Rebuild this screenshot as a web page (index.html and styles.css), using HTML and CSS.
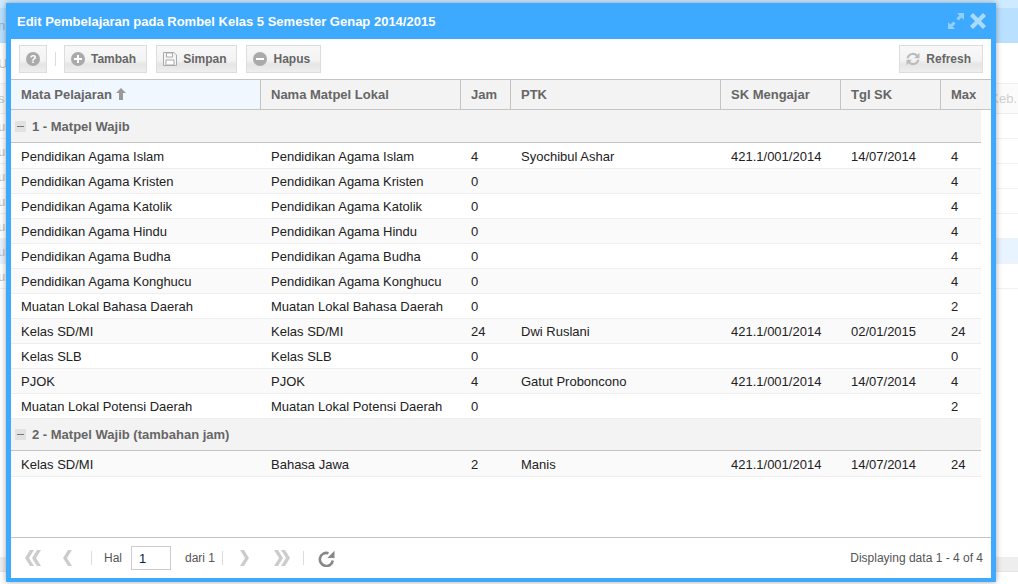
FILE: index.html
```html
<!DOCTYPE html>
<html lang="id">
<head>
<meta charset="utf-8">
<title>Edit Pembelajaran</title>
<link rel="stylesheet" href="styles.css">
</head>
<body>
<div class="backdrop">
  <div class="bd-top"></div>
  <div class="bd-band"><span class="bd-left">n</span></div>
  <div class="bd-tools"><span class="bd-left">U</span></div>
  <div class="bd-head"><span class="bd-left">s</span><span class="bd-keb">Keb.</span></div>
  <div class="bd-row"><span class="bd-left">ul</span></div>
  <div class="bd-row"><span class="bd-left">ul</span></div>
  <div class="bd-row"><span class="bd-left">ul</span></div>
  <div class="bd-row"><span class="bd-left">ul</span></div>
  <div class="bd-row"><span class="bd-left">ul</span></div>
  <div class="bd-row bd-sel"><span class="bd-left">ul</span></div>
  <div class="bd-row"><span class="bd-left">ul</span></div>
  <div class="bd-foot"></div>
</div>

<section class="win">
  <header class="win-title">
    <h1>Edit Pembelajaran pada Rombel Kelas 5 Semester Genap 2014/2015</h1>
    <div class="win-tools">
      <svg class="i-max" viewBox="1 1 16 16" width="16" height="16"><path d="M10 1h7v7l-2.400-2.400-3 3-2.200-2.200 3-3zM8 17H1v-7l2.400 2.400 3-3 2.200 2.200-3 3z"/></svg>
      <svg class="i-close" viewBox="1 1 16 16" width="16" height="16"><path d="M4 1l5 5 5-5 3 3-5 5 5 5-3 3-5-5-5 5-3-3 5-5-5-5z"/></svg>
    </div>
  </header>

  <div class="toolbar">
    <button class="btn btn-icon"><svg viewBox="0 0 14 14" width="14" height="14"><circle cx="7" cy="7" r="7" fill="#aaa"/><text x="7" y="11" class="q">?</text></svg></button>
    <span class="tb-sep"></span>
    <button class="btn"><svg viewBox="0 0 14 14" width="14" height="14"><circle cx="7" cy="7" r="7" fill="#aaa"/><path d="M6 3h2v3h3v2H8v3H6V8H3V6h3z" fill="#fff"/></svg>Tambah</button>
    <button class="btn"><svg viewBox="0 0 14 14" width="14" height="14"><path d="M.5.500h10.500l2.500 2.500v10.500H.5z" fill="#f4f4f4" stroke="#aaa"/><path d="M3.500 1h6v4h-6zM3 8h8v5H3z" fill="#fff" stroke="#aaa"/></svg>Simpan</button>
    <button class="btn"><svg viewBox="0 0 14 14" width="14" height="14"><circle cx="7" cy="7" r="7" fill="#aaa"/><path d="M3 6h8v2H3z" fill="#fff"/></svg>Hapus</button>
    <button class="btn btn-right"><svg viewBox="0 0 14 14" width="14" height="14"><path d="M.5 6.200a6.600 6.600 0 0 1 11-3.500L13.500.8v5.400H8.100l1.900-1.900A4.200 4.200 0 0 0 2.800 6.200zM13.500 7.800a6.600 6.600 0 0 1-11 3.500L.5 13.200V7.800h5.400L4 9.700a4.200 4.200 0 0 0 7.200-1.900z" fill="#bbb"/></svg>Refresh</button>
  </div>

  <div class="grid-area">
    <table class="grid grid-head">
      <colgroup><col class="c1"><col class="c2"><col class="c3"><col class="c4"><col class="c5"><col class="c6"><col class="c7h"></colgroup>
      <thead>
        <tr>
          <th class="sorted">Mata Pelajaran <svg class="i-sort" viewBox="0 0 10 12" width="10" height="12"><path d="M5 0l5 5H7v7H3V5H0z"/></svg></th>
          <th>Nama Matpel Lokal</th><th>Jam</th><th>PTK</th><th>SK Mengajar</th><th>Tgl SK</th><th>Max</th>
        </tr>
      </thead>
    </table>
    <table class="grid grid-body">
      <colgroup><col class="c1"><col class="c2"><col class="c3"><col class="c4"><col class="c5"><col class="c6"><col class="c7"></colgroup>
      <tbody>
        <tr class="group"><td colspan="7"><span class="tree"></span>1 - Matpel Wajib</td></tr>
        <tr class="first"><td>Pendidikan Agama Islam</td><td>Pendidikan Agama Islam</td><td>4</td><td>Syochibul Ashar</td><td>421.1/001/2014</td><td>14/07/2014</td><td>4</td></tr>
        <tr class="alt"><td>Pendidikan Agama Kristen</td><td>Pendidikan Agama Kristen</td><td>0</td><td></td><td></td><td></td><td>4</td></tr>
        <tr><td>Pendidikan Agama Katolik</td><td>Pendidikan Agama Katolik</td><td>0</td><td></td><td></td><td></td><td>4</td></tr>
        <tr class="alt"><td>Pendidikan Agama Hindu</td><td>Pendidikan Agama Hindu</td><td>0</td><td></td><td></td><td></td><td>4</td></tr>
        <tr><td>Pendidikan Agama Budha</td><td>Pendidikan Agama Budha</td><td>0</td><td></td><td></td><td></td><td>4</td></tr>
        <tr class="alt"><td>Pendidikan Agama Konghucu</td><td>Pendidikan Agama Konghucu</td><td>0</td><td></td><td></td><td></td><td>4</td></tr>
        <tr><td>Muatan Lokal Bahasa Daerah</td><td>Muatan Lokal Bahasa Daerah</td><td>0</td><td></td><td></td><td></td><td>2</td></tr>
        <tr class="alt"><td>Kelas SD/MI</td><td>Kelas SD/MI</td><td>24</td><td>Dwi Ruslani</td><td>421.1/001/2014</td><td>02/01/2015</td><td>24</td></tr>
        <tr><td>Kelas SLB</td><td>Kelas SLB</td><td>0</td><td></td><td></td><td></td><td>0</td></tr>
        <tr class="alt"><td>PJOK</td><td>PJOK</td><td>4</td><td>Gatut Proboncono</td><td>421.1/001/2014</td><td>14/07/2014</td><td>4</td></tr>
        <tr><td>Muatan Lokal Potensi Daerah</td><td>Muatan Lokal Potensi Daerah</td><td>0</td><td></td><td></td><td></td><td>2</td></tr>
        <tr class="group group-next"><td colspan="7"><span class="tree"></span>2 - Matpel Wajib (tambahan jam)</td></tr>
        <tr class="alt first"><td>Kelas SD/MI</td><td>Bahasa Jawa</td><td>2</td><td>Manis</td><td>421.1/001/2014</td><td>14/07/2014</td><td>24</td></tr>
      </tbody>
    </table>
  </div>

  <footer class="pager">
    <svg class="pg pg-first" viewBox="0 0 18 16" width="18" height="16"><path d="M7 0h4L6 8l5 8H7L2 8zM14 0h4l-5 8 5 8h-4L9 8z"/></svg>
    <svg class="pg pg-prev" viewBox="0 0 10 16" width="10" height="16"><path d="M6 0h4L5 8l5 8H6L1 8z"/></svg>
    <span class="pg-sep"></span>
    <span class="pg-label">Hal</span>
    <input class="pg-input" value="1" aria-label="Halaman">
    <span class="pg-label pg-of">dari 1</span>
    <span class="pg-sep pg-sep2"></span>
    <svg class="pg pg-next" viewBox="0 0 10 16" width="10" height="16"><path d="M0 0h4l5 8-5 8H0l5-8z"/></svg>
    <svg class="pg pg-last" viewBox="0 0 18 16" width="18" height="16"><path d="M0 0h4l5 8-5 8H0l5-8zM7 0h4l5 8-5 8H7l5-8z"/></svg>
    <span class="pg-sep pg-sep3"></span>
    <svg class="pg-reload" viewBox="0 0 17 17" width="17" height="17"><path d="M14.800 10.500A6.500 6.500 0 1 1 10.500 3.300" fill="none" stroke="#888" stroke-width="2.600"/><path d="M16.500 .8v7.200H9.300z" fill="#888"/></svg>
    <span class="pg-info">Displaying data 1 - 4 of 4</span>
  </footer>
</section>
</body>
</html>
```
FILE: styles.css
```css
* { box-sizing: border-box; }
html, body { margin: 0; padding: 0; height: 100%; overflow: hidden; }
body { background: #fff; font-family: "Liberation Sans", Arial, sans-serif; font-size: 13px; color: #222; }

.backdrop { height: 584px; color: #c4c4c4; white-space: nowrap; overflow: hidden; }
.backdrop > div { display: flex; justify-content: space-between; align-items: center; }
.bd-left { margin-left: -2px; }
.bd-top { height: 8px; background: #cdeaff; }
.bd-band { height: 35px; background: #b9e0ff; color: #8fb6d0; }
.bd-tools { height: 40px; }
.bd-head { height: 31px; background: #fbfbfb; border-top: 1px solid #eee; border-bottom: 1px solid #eee; }
.bd-keb { margin-right: 1px; color: #d0d0d0; }
.bd-row { height: 25px; border-bottom: 1px solid #f1f1f1; }
.bd-sel { background: #e8f4ff; }
.bd-foot { height: 15px; margin-top: 268px; background: #eee; border-bottom: 1px solid #e4e4e4; }

.win { position: absolute; left: 6px; top: 3px; width: 990px; height: 579px; background: #3daaff; padding: 0 5px 4px; display: flex; flex-direction: column; box-shadow: 0 0 6px rgba(0,0,0,.35); }

.win-title { height: 36px; flex: none; display: flex; align-items: center; justify-content: space-between; margin: 0 -5px; padding: 0 10px 0 11px; }
.win-title h1 { margin: 0; font-size: 13px; font-weight: bold; color: #fff; }
.win-tools { display: flex; gap: 6px; }
.i-max { fill: #8fd0ff; }
.i-close { fill: #a9dbff; }

.toolbar { height: 40px; flex: none; background: #fff; display: flex; align-items: flex-start; padding: 6px 8px 0; }
.btn { height: 28px; border: 1px solid #ddd; background: linear-gradient(#f8f8f8 0, #f3f3f3 55%, #e5e5e5 70%, #eee 100%); font: bold 12px "Liberation Sans", Arial, sans-serif; color: #666; display: flex; align-items: center; gap: 6px; padding: 0 10px 0 6px; margin-right: 9px; }
.btn-icon { width: 28px; justify-content: center; padding: 0; margin-right: 0; }
.tb-sep { width: 1px; height: 14px; background: #ddd; margin: 7px 8px 0; }
.btn-right { margin-left: auto; margin-right: 0; padding-right: 11px; }
.q { font: bold 11px "Liberation Sans", sans-serif; fill: #fff; text-anchor: middle; }

.grid-area { flex: 1; min-height: 0; background: #fff; overflow: hidden; }
.grid { border-collapse: separate; border-spacing: 0; table-layout: fixed; }
.grid-head { width: 980px; }
.grid-body { width: 970px; }
.c1 { width: 250px; } .c2 { width: 200px; } .c3 { width: 50px; } .c4 { width: 210px; } .c5 { width: 120px; } .c6 { width: 100px; } .c7 { width: 40px; } .c7h { width: 50px; }
.grid th { height: 31px; background: #f3f3f3; border-top: 1px solid #c4c4c4; border-bottom: 1px solid #c4c4c4; border-right: 1px solid #c4c4c4; text-align: left; font-size: 13px; font-weight: bold; color: #666; padding: 0 10px; white-space: nowrap; }
.grid th:last-child { border-right: 0; }
.grid th.sorted { background: #f0f7fe; }
.i-sort { fill: #999; vertical-align: -1px; }
.grid td { height: 25px; padding: 1px 10px 0; border-bottom: 1px solid #eee; color: #222; white-space: nowrap; overflow: hidden; }
.grid tr.first td { height: 26px; }
.grid tr.alt td { background: #fafafa; }
.grid tr.group td { height: 33px; background: #f3f3f3; font-weight: bold; color: #666; padding: 0 0 0 4px; border-bottom: 1px solid #c4c4c4; }
.grid tr.group-next td { height: 32px; }
.tree { display: inline-block; position: relative; width: 11px; height: 11px; background: #e2e2e2; margin-right: 6px; vertical-align: -1px; }
.tree::after { content: ""; position: absolute; left: 2px; right: 2px; top: 5px; height: 1px; background: #777; }

.pager { height: 41px; flex: none; background: #fff; border-top: 1px solid #c4c4c4; display: flex; align-items: center; padding: 0 8px 0 12px; font-size: 12px; color: #555; }
.pg { fill: #ccc; flex: none; }
.pg-prev { margin-left: 21px; }
.pg-sep { width: 1px; height: 14px; background: #ddd; margin-left: 19px; flex: none; }
.pg-label { margin-left: 12px; }
.pg-input { width: 40px; height: 24px; margin-left: 9px; border: 1px solid #ccc; padding: 0 7px; font: 13px "Liberation Sans", sans-serif; color: #024; }
.pg-of { margin-left: 14px; }
.pg-sep2 { margin-left: 7px; }
.pg-next { margin-left: 17px; }
.pg-last { margin-left: 24px; }
.pg-sep3 { margin-left: 11px; }
.pg-reload { margin-left: 14px; }
.pg-info { margin-left: auto; }
```
